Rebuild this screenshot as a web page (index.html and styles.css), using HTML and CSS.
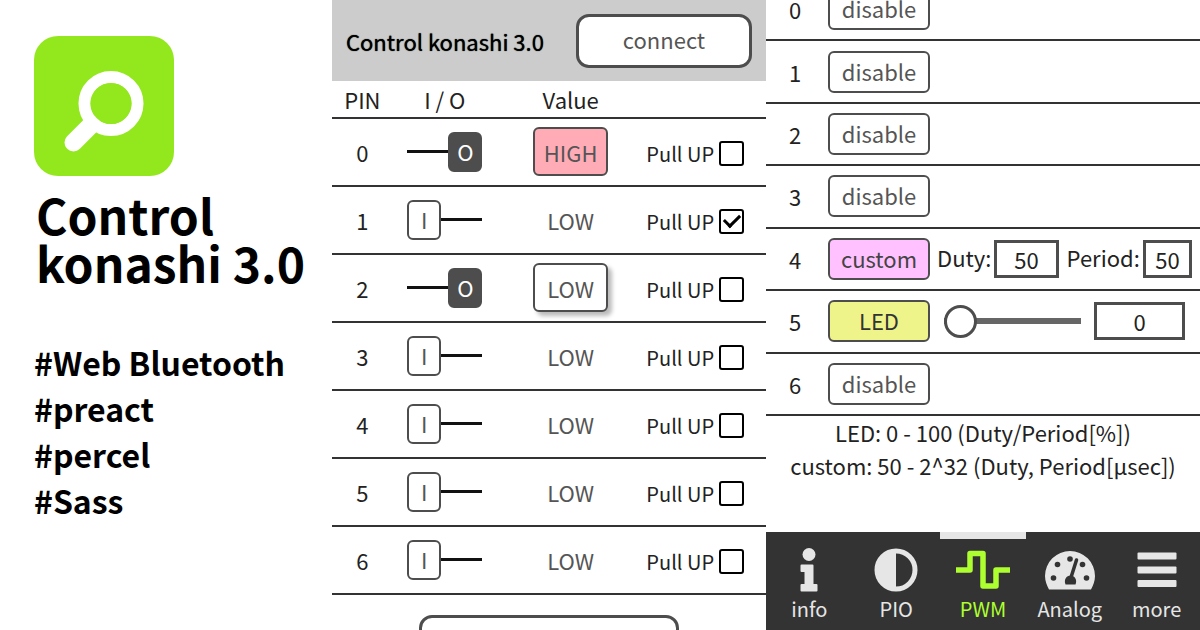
FILE: index.html
```html
<!DOCTYPE html>
<html lang="en">
<head>
<meta charset="utf-8">
<title>Control konashi 3.0</title>
<link rel="stylesheet" href="styles.css">
</head>
<body>
<main class="page">
  <section class="intro">
    <svg class="logo" viewBox="0 0 140 140" aria-hidden="true">
      <rect width="140" height="140" rx="24" fill="#93e81d"/>
      <circle cx="77" cy="67.500" r="26.500" fill="none" stroke="#fff" stroke-width="12"/>
      <path d="M58 88 39.500 106.500" stroke="#fff" stroke-width="18" stroke-linecap="round"/>
      <circle cx="77" cy="67.500" r="20.500" fill="#93e81d"/>
    </svg>
    <h1 class="intro-title">Control<br>konashi 3.0</h1>
    <ul class="tags">
      <li>#Web Bluetooth</li>
      <li>#preact</li>
      <li>#percel</li>
      <li>#Sass</li>
    </ul>
  </section>

  <section class="pio">
    <header class="bar">
      <h2 class="bar-title">Control konashi 3.0</h2>
      <button class="btn connect" type="button">connect</button>
    </header>
    <table class="pins">
      <thead>
        <tr><th class="c-pin">PIN</th><th class="c-io">I / O</th><th class="c-value">Value</th><th class="c-pull" aria-label="Pull up"></th></tr>
      </thead>
      <tbody>
        <tr><td>0</td><td><label class="io"><input type="checkbox" aria-label="Pin 0 output" checked><span class="knob">O</span></label></td><td><button class="btn value high" type="button">HIGH</button></td><td><label class="pull">Pull UP<input type="checkbox"></label></td></tr>
        <tr><td>1</td><td><label class="io"><input type="checkbox" aria-label="Pin 1 output"><span class="knob">I</span></label></td><td><span class="level">LOW</span></td><td><label class="pull">Pull UP<input type="checkbox" checked></label></td></tr>
        <tr><td>2</td><td><label class="io"><input type="checkbox" aria-label="Pin 2 output" checked><span class="knob">O</span></label></td><td><button class="btn value low" type="button">LOW</button></td><td><label class="pull">Pull UP<input type="checkbox"></label></td></tr>
        <tr><td>3</td><td><label class="io"><input type="checkbox" aria-label="Pin 3 output"><span class="knob">I</span></label></td><td><span class="level">LOW</span></td><td><label class="pull">Pull UP<input type="checkbox"></label></td></tr>
        <tr><td>4</td><td><label class="io"><input type="checkbox" aria-label="Pin 4 output"><span class="knob">I</span></label></td><td><span class="level">LOW</span></td><td><label class="pull">Pull UP<input type="checkbox"></label></td></tr>
        <tr><td>5</td><td><label class="io"><input type="checkbox" aria-label="Pin 5 output"><span class="knob">I</span></label></td><td><span class="level">LOW</span></td><td><label class="pull">Pull UP<input type="checkbox"></label></td></tr>
        <tr><td>6</td><td><label class="io"><input type="checkbox" aria-label="Pin 6 output"><span class="knob">I</span></label></td><td><span class="level">LOW</span></td><td><label class="pull">Pull UP<input type="checkbox"></label></td></tr>
      </tbody>
    </table>
    <button class="btn bottom" type="button" aria-label="Action"></button>
  </section>

  <section class="pwm">
    <div class="pwm-body">
      <table class="channels">
        <tbody>
          <tr><td class="c-ch">0</td><td class="c-mode"><button class="btn mode" type="button">disable</button></td><td></td></tr>
          <tr><td>1</td><td><button class="btn mode" type="button">disable</button></td><td></td></tr>
          <tr><td>2</td><td><button class="btn mode" type="button">disable</button></td><td></td></tr>
          <tr><td>3</td><td><button class="btn mode" type="button">disable</button></td><td></td></tr>
          <tr><td>4</td><td><button class="btn mode custom" type="button">custom</button></td><td>
            <div class="controls">
              <label for="duty">Duty:</label><input id="duty" class="num duty" type="text" value="50">
              <label class="period-label" for="period">Period:</label><input id="period" class="num period" type="text" value="50">
            </div></td></tr>
          <tr><td>5</td><td><button class="btn mode led" type="button">LED</button></td><td>
            <div class="controls slider">
              <input class="range" type="range" min="0" max="100" value="0" aria-label="LED duty">
              <input class="num level-num" type="text" value="0" aria-label="LED value">
            </div></td></tr>
          <tr><td>6</td><td><button class="btn mode" type="button">disable</button></td><td></td></tr>
        </tbody>
      </table>
      <p class="notes">LED: 0 - 100 (Duty/Period[%])<br>custom: 50 - 2^32 (Duty, Period[µsec])</p>
    </div>
    <nav class="tabs">
      <a class="tab" href="#info">
        <svg class="icon" viewBox="0 0 56 48" fill="currentColor" aria-hidden="true"><circle cx="28" cy="8.500" r="6.500"/><path d="M20.500 18.500h11q1 0 1 1V38h3q1 0 1 1v5.500q0 1-1 1h-15q-1 0-1-1V39q0-1 1-1h3V26h-3q-1 0-1-1v-5.500q0-1 1-1z"/></svg>
        info</a>
      <a class="tab" href="#pio">
        <svg class="icon" viewBox="0 0 56 48" aria-hidden="true"><circle cx="28" cy="24" r="19" fill="none" stroke="currentColor" stroke-width="5"/><path d="M28 4a20 20 0 0 0 0 40z" fill="currentColor"/></svg>
        PIO</a>
      <a class="tab active" href="#pwm">
        <svg class="icon" viewBox="0 0 56 48" fill="none" stroke="currentColor" stroke-width="5.500" stroke-linejoin="round" aria-hidden="true"><path d="M1 24H15V7.500H28V40H41V24H55"/></svg>
        PWM</a>
      <a class="tab" href="#analog">
        <svg class="icon" viewBox="0 0 56 48" aria-hidden="true"><path d="M7 43.500C5 39.500 3 35 3 30a25 25 0 0 1 50 0c0 5-2 9.500-4 13.500z" fill="currentColor"/><g fill="#333"><circle cx="11.500" cy="32" r="2.800"/><circle cx="15.500" cy="18.500" r="2.800"/><circle cx="28" cy="13" r="2.800"/><circle cx="40.500" cy="18.500" r="2.800"/><circle cx="44.500" cy="32" r="2.800"/></g><path d="M34.500 14 28.500 33" stroke="#333" stroke-width="3.500" stroke-linecap="round"/><path d="M23.500 38.500c-2-5 1-9 5-9s7 4 5 9z" fill="#333"/></svg>
        Analog</a>
      <a class="tab" href="#more">
        <svg class="icon" viewBox="0 0 56 48" fill="currentColor" aria-hidden="true"><rect x="8.500" y="6.500" width="39" height="7" rx="1"/><rect x="8.500" y="20.500" width="39" height="7" rx="1"/><rect x="8.500" y="34" width="39" height="7" rx="1"/></svg>
        more</a>
    </nav>
  </section>
</main>
</body>
</html>
```
FILE: styles.css
```css
* {
  box-sizing: border-box;
}

body {
  margin: 0;
  background: #fff;
  color: #222;
  font-family: "Noto Sans CJK JP", "Noto Sans", sans-serif;
  font-size: 22px;
  line-height: 32px;
}

h1, h2, p, ul {
  margin: 0;
  padding: 0;
}

button, input {
  margin: 0;
  color: inherit;
  font: inherit;
}

.page {
  display: grid;
  grid-template-columns: 332fr 434fr 434fr;
  height: 100vh;
  overflow: hidden;
}

/* Intro */
.intro {
  padding: 35px 0 0 34px;
  color: #000;
  font-weight: 700;
}

.logo {
  display: block;
  width: 140px;
  height: 142px;
}

.intro-title {
  padding: 13px 0 0 2px;
  font-size: 48px;
  line-height: 48px;
}

.tags {
  padding-top: 53px;
  list-style: none;
  font-size: 32px;
  line-height: 46px;
}

/* Buttons */
.btn {
  padding: 0 0 2px;
  border: 2px solid #4d4d4d;
  border-radius: 6px;
  background: #fff;
  color: #555;
  line-height: 32px;
}

/* Digital pins */
.pio {
  display: flex;
  flex-direction: column;
  min-width: 0;
  overflow: hidden;
}

.bar {
  display: flex;
  flex: none;
  align-items: center;
  justify-content: space-between;
  height: 81px;
  padding: 0 14px;
  background: #ccc;
}

.bar-title {
  color: #000;
  font-size: 22px;
  font-weight: 400;
  text-shadow: 0 0 1px #000;
}

.connect {
  width: 176px;
  height: 54px;
  padding-bottom: 4px;
  border-width: 3px;
  border-radius: 13px;
}

table {
  width: 100%;
  table-layout: fixed;
  border-collapse: separate;
  border-spacing: 0;
}

th, td {
  padding: 0;
  border-bottom: 2px solid #333;
  font-weight: 400;
  text-align: center;
}

.pins {
  flex: none;
}

.pins th {
  height: 38px;
  padding-bottom: 1px;
}

.pins td {
  height: 68px;
  padding-bottom: 1px;
}

.c-pin { width: 14%; }
.c-io { width: 24%; }
.c-value { width: 34%; }
.c-pull { width: 28%; }

.io {
  display: inline-grid;
  align-items: center;
  width: 75px;
  height: 40px;
  background: linear-gradient(#111, #111) center / 100% 3px no-repeat;
  vertical-align: middle;
}

.io input,
.knob {
  grid-area: 1 / 1;
}

.io input {
  width: 100%;
  height: 100%;
  opacity: 0;
}

.knob {
  width: 34px;
  height: 40px;
  border: 2px solid #4d4d4d;
  border-radius: 6px;
  background: #fff;
  color: #555;
  line-height: 34px;
  pointer-events: none;
}

.io input:checked + .knob {
  justify-self: end;
  background: #4d4d4d;
  color: #fff;
}

.level {
  color: #555;
}

.value {
  width: 75px;
  height: 49px;
  padding: 0;
  vertical-align: middle;
}

.high {
  background: #ffacb7;
}

.low {
  box-shadow: 4px 4px 4px #bbb;
}

.pull {
  display: inline-flex;
  align-items: center;
  gap: 5px;
  padding-right: 20px;
  font-size: 20px;
  white-space: nowrap;
  vertical-align: middle;
}

.pull input {
  display: grid;
  place-items: center;
  width: 25px;
  height: 25px;
  border: 2px solid #000;
  border-radius: 3px;
  appearance: none;
}

.pull input:checked::before {
  width: 7px;
  height: 13px;
  margin-bottom: 5px;
  border: solid #000;
  border-width: 0 3px 3px 0;
  content: "";
  transform: rotate(45deg);
}

.bottom {
  flex: none;
  align-self: center;
  width: 60%;
  height: 54px;
  margin-top: 20px;
  border-width: 3px;
  border-radius: 13px;
}

/* PWM */
.pwm {
  display: flex;
  flex-direction: column;
  min-width: 0;
  min-height: 0;
}

.pwm-body {
  flex: 1;
  min-height: 0;
  overflow: hidden;
}

.channels {
  height: 437px;
  margin-top: -21px;
}

.c-ch { width: 58px; }
.c-mode { width: 110px; }

.mode {
  width: 102px;
  height: 42px;
  vertical-align: middle;
}

.custom {
  background: #ffc1ff;
  color: #444;
}

.led {
  background: #eef38a;
  color: #333;
}

.controls {
  display: flex;
  align-items: center;
  padding: 0 8px 0 3px;
}

.controls label {
  padding: 0 3px 4px 0;
}

.controls .period-label {
  padding-left: 8px;
}

.num {
  min-width: 0;
  height: 38px;
  padding: 0;
  border: 3px solid #4d4d4d;
  background: #fff;
  text-align: center;
}

.duty {
  flex: 66;
}

.period {
  flex: 49;
}

.slider {
  gap: 13px;
  padding: 0 15px 0 10px;
}

.range {
  flex: 138;
  min-width: 0;
  height: 32px;
  border-radius: 3px;
  background: linear-gradient(#666, #666) center / 100% 6px no-repeat;
  appearance: none;
}

.range::-webkit-slider-thumb {
  width: 33px;
  height: 33px;
  border: 3px solid #4d4d4d;
  border-radius: 50%;
  background: #fff;
  appearance: none;
}

.level-num {
  flex: 0 0 91px;
  width: 91px;
}

.notes {
  line-height: 33px;
  text-align: center;
}

.tabs {
  display: grid;
  flex: none;
  grid-template-columns: repeat(5, 1fr);
  height: 98px;
  background: #333;
}

.tab {
  display: flex;
  flex-direction: column;
  align-items: center;
  padding-top: 7px;
  border-top: 7px solid transparent;
  color: #e6e6e6;
  font-size: 20px;
  line-height: 30px;
  text-decoration: none;
}

.active {
  border-image: linear-gradient(#e6e6e6, #e6e6e6) 1;
  color: #adff2f;
}

.icon {
  width: 56px;
  height: 48px;
}
```
